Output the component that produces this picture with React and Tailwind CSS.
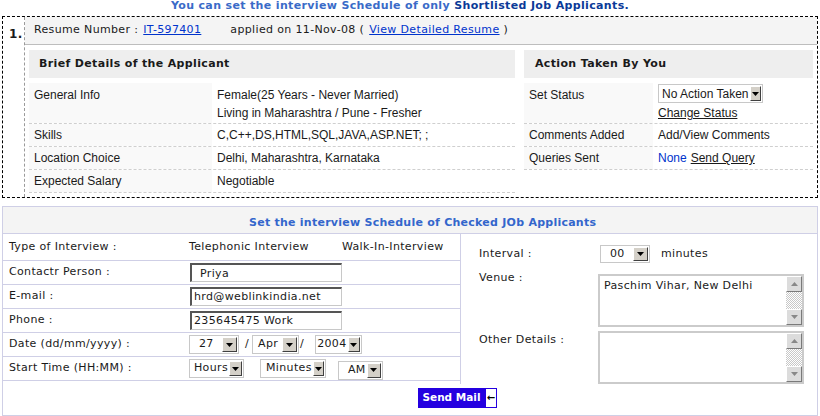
import React from 'react';

const V = "font-['DejaVu_Sans',Verdana,sans-serif] tracking-[0.35px]";
const A = "font-['Liberation_Sans',Arial,sans-serif]";

function Tri({ up, color = '#000' }) {
  return (
    <svg width="7" height="4" viewBox="0 0 7 4">
      <path d={up ? 'M0 4h7L3.5 0z' : 'M0 0h7L3.5 4z'} fill={color} />
    </svg>
  );
}

function Select({ className, textClass, children }) {
  return (
    <div className={`flex items-stretch bg-white border border-[#c8c8c8] ${className}`}>
      <span className={`flex-1 flex items-center whitespace-nowrap ${textClass}`}>{children}</span>
      <span className="w-[15px] m-[1px] flex items-center justify-center bg-[#d4d0c8] border border-t-white border-l-white border-r-[#404040] border-b-[#404040]">
        <Tri />
      </span>
    </div>
  );
}

function Input({ children, textClass = 'pl-[2px]' }) {
  return (
    <div
      className={`w-[152px] h-[19px] ml-[1px] flex items-center bg-white border-t-2 border-l-2 border-r border-b border-t-[#555] border-l-[#555] border-r-[#c8c8c8] border-b-[#c8c8c8] text-[11px] ${textClass}`}
    >
      {children}
    </div>
  );
}

function ScrollBtn({ up }) {
  return (
    <div className="h-[16px] flex items-center justify-center bg-[#dcdcdc] border border-t-white border-l-white border-r-[#7a7a7a] border-b-[#7a7a7a]">
      <Tri up={up} color="#888" />
    </div>
  );
}

function TextBox({ value }) {
  return (
    <div className="flex w-[206px] h-[53px] bg-white border-2 border-[#cbcbcb]">
      <div className="flex-1 pl-[4px] pt-[3px] text-[11px] leading-[14px]">{value}</div>
      <div className="w-[16px] flex flex-col">
        <ScrollBtn up />
        <div className="flex-1 bg-[conic-gradient(#ffffff_25%,#c8c8c8_0_50%,#ffffff_0_75%,#c8c8c8_0)] bg-[length:2px_2px]" />
        <ScrollBtn />
      </div>
    </div>
  );
}

function LeftRow({ label, children, tall }) {
  return (
    <div className={`flex border-b border-dashed border-[#cfcfcf] ${tall ? 'h-[41px]' : 'h-[23px]'}`}>
      <div className={`w-[183px] bg-[#f9f9f9] pl-[5px] ${tall ? 'pt-[3px] leading-[18px]' : 'flex items-center'}`}>{label}</div>
      <div className={`flex-1 pl-[5px] ${tall ? 'pt-[3px] leading-[18px]' : 'flex items-center'}`}>{children}</div>
    </div>
  );
}

function RightRow({ label, children, tall }) {
  return (
    <div className={`flex border-b border-dashed border-[#cfcfcf] ${tall ? 'h-[41px]' : 'h-[23px]'}`}>
      <div className={`w-[129px] bg-[#f9f9f9] pl-[5px] ${tall ? 'pt-[3px] leading-[18px]' : 'flex items-center'}`}>{label}</div>
      <div className={`flex-1 pl-[5px] ${tall ? 'pt-[1px]' : 'flex items-center'}`}>{children}</div>
    </div>
  );
}

function FormRow({ label, children, first }) {
  return (
    <div className={`grid grid-cols-[186px_1fr] items-center border-b border-[#cfcfe6] ${first ? 'h-[27px]' : 'h-[24px]'}`}>
      <div className="pl-[6px]">{label}</div>
      <div className="flex items-center">{children}</div>
    </div>
  );
}

export default function App() {
  return (
    <div className={`w-[820px] h-[416px] overflow-hidden bg-white text-[#1a1a1a] ${A}`}>
      <div className={`h-[16px] w-[800px] text-center text-[11px] leading-[12px] font-bold ${V}`}>
        <span className="text-[#3a6bc8]">You can set the interview Schedule of only </span>
        <span className="text-[#0b3a98]">Shortlisted Job Applicants.</span>
      </div>

      <div className="mx-[2px] h-[182px] flex border border-dashed border-black">
        <div className={`w-[22px] shrink-0 border-r border-dashed border-[#9a9a9a] pl-[6px] pt-[8px] text-[12px] font-bold ${V}`}>1.</div>
        <div className="flex-1 flex flex-col">
          <div className={`h-[28px] flex items-center pl-[9px] bg-[#f4f4f4] border-b border-[#bdbdbd] text-[11px] ${V}`}>
            <span>Resume Number :</span>
            <a className="ml-[5px] text-[#0033cc] underline">IT-597401</a>
            <span className="ml-[29px]">applied on 11-Nov-08 (</span>
            <a className="ml-[5px] text-[#0033cc] underline">View Detailed Resume</a>
            <span className="ml-[4px]">)</span>
          </div>

          <div className="flex ml-[4px] mt-[5px] gap-[9px] text-[12px]">
            <div className="w-[486px]">
              <div className={`h-[28px] flex items-center pl-[10px] bg-[#eeeeee] text-[11px] font-bold ${V}`}>Brief Details of the Applicant</div>
              <div className="mt-[5px]">
                <LeftRow label="General Info" tall>
                  <div>Female(25 Years - Never Married)</div>
                  <div>Living in Maharashtra / Pune - Fresher</div>
                </LeftRow>
                <LeftRow label="Skills">C,C++,DS,HTML,SQL,JAVA,ASP.NET; ;</LeftRow>
                <LeftRow label="Location Choice">Delhi, Maharashtra, Karnataka</LeftRow>
                <LeftRow label="Expected Salary">Negotiable</LeftRow>
              </div>
            </div>
            <div className="w-[289px]">
              <div className={`h-[28px] flex items-center pl-[11px] bg-[#eeeeee] text-[11px] font-bold ${V}`}>Action Taken By You</div>
              <div className="mt-[5px]">
                <RightRow label="Set Status" tall>
                  <Select className="w-[105px] h-[19px] border-[#a8a8a8]" textClass="pl-[3px] text-[12px]">No Action Taken</Select>
                  <div className="leading-[18px] mt-[1px]"><a className="underline">Change Status</a></div>
                </RightRow>
                <RightRow label="Comments Added">Add/View Comments</RightRow>
                <RightRow label="Queries Sent">
                  <span className="text-[#0033cc]">None</span>
                  <a className="ml-[4px] underline">Send Query</a>
                </RightRow>
              </div>
            </div>
          </div>
        </div>
      </div>

      <div className={`mx-[2px] mt-[8px] h-[210px] border border-[#cfcfe6] text-[11px] ${V}`}>
        <div className="h-[27px] pl-[246px] pt-[9px] leading-[13px] bg-[#f4f4f4] border-b border-[#cfcfe6] font-bold text-[#3366cc] tracking-[0.25px]">
          Set the interview Schedule of Checked JOb Applicants
        </div>

        <div className="flex">
          <div className="w-[458px] border-r border-[#cfcfe6]">
            <FormRow label="Type of Interview :" first>
              <span className="w-[153px]">Telephonic Interview</span>
              <span>Walk-In-Interview</span>
            </FormRow>
            <FormRow label="Contactr Person :">
              <Input textClass="pl-[8px] pt-[2px]">Priya</Input>
            </FormRow>
            <FormRow label="E-mail :">
              <Input>hrd@weblinkindia.net</Input>
            </FormRow>
            <FormRow label="Phone :">
              <Input>235645475 Work</Input>
            </FormRow>
            <FormRow label="Date (dd/mm/yyyy) :">
              <Select className="w-[50px] h-[19px]" textClass="pl-[9px]">27</Select>
              <span className="ml-[6px]">/</span>
              <Select className="w-[47px] h-[19px] ml-[3px]" textClass="pl-[5px]">Apr</Select>
              <span className="ml-[1px]">/</span>
              <Select className="w-[47px] h-[19px] ml-[11px]" textClass="pl-[1px]">2004</Select>
            </FormRow>
            <FormRow label="Start Time (HH:MM) :">
              <Select className="w-[55px] h-[19px]" textClass="pl-[4px]">Hours</Select>
              <Select className="w-[66px] h-[19px] ml-[16px]" textClass="pl-[5px]">Minutes</Select>
              <Select className="w-[45px] h-[19px] ml-[12px] mt-[3px]" textClass="pl-[9px]">AM</Select>
            </FormRow>
          </div>

          <div className="flex-1 pl-[18px] pt-[11px]">
            <div className="grid grid-cols-[121px_1fr] items-center h-[18px]">
              <span>Interval :</span>
              <div className="flex items-center">
                <Select className="w-[50px] h-[18px]" textClass="pl-[9px]">00</Select>
                <span className="ml-[11px]">minutes</span>
              </div>
            </div>
            <div className="grid grid-cols-[119px_1fr] mt-[8px]">
              <span className="leading-[13px]">Venue :</span>
              <div className="mt-[3px]"><TextBox value="Paschim Vihar, New Delhi" /></div>
            </div>
            <div className="grid grid-cols-[119px_1fr] mt-[4px]">
              <span className="leading-[13px] mt-[2px]">Other Details :</span>
              <TextBox value="" />
            </div>
          </div>
        </div>

        <div className="flex ml-[415px] mt-[4px] h-[20px] tracking-normal">
          <div className="w-[67px] flex items-center justify-center bg-[#2400e0] text-white text-[10.5px] font-bold">Send Mail</div>
          <div className="w-[12px] flex items-center justify-center bg-white border border-[#2400e0] text-black text-[10px] font-bold leading-none">←</div>
        </div>
      </div>
    </div>
  );
}
